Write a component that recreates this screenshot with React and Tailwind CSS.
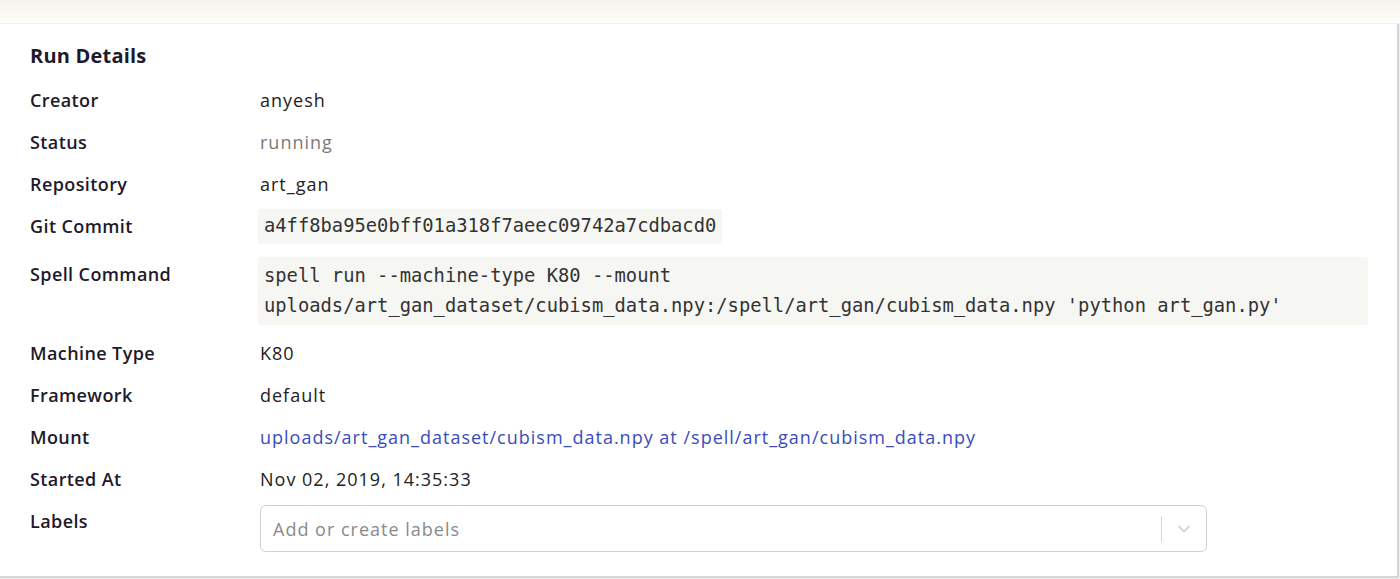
import { ChevronDown } from "lucide-react";

const rows = [
  { label: "Creator", value: "anyesh" },
  { label: "Status", value: "running", tone: "text-[#7a7a7a]" },
  { label: "Repository", value: "art_gan" },
];

const rowsAfter = [
  { label: "Machine Type", value: "K80" },
  { label: "Framework", value: "default" },
  {
    label: "Mount",
    value: "uploads/art_gan_dataset/cubism_data.npy at /spell/art_gan/cubism_data.npy",
    tone: "text-[#3a4bbf]",
  },
  { label: "Started At", value: "Nov 02, 2019, 14:35:33" },
];

const labelCls = "shrink-0 font-semibold tracking-[0.4px] text-[#1d1a2b]";

function Row({ label, value, tone }) {
  return (
    <div className="flex items-center h-[42px]">
      <div className={`w-[230px] ${labelCls}`}>{label}</div>
      <div className={tone || "text-[#222]"}>{value}</div>
    </div>
  );
}

export default function App() {
  const mono = { fontFamily: "'DejaVu Sans Mono', monospace", letterSpacing: 0 };
  return (
    <div className="w-[1400px] h-[579px] bg-[#eeeeee] overflow-hidden font-['Open_Sans',sans-serif] text-[18px] leading-[30px] tracking-[1px]">
      <div className="h-[24px] bg-gradient-to-b from-[#f6f4ec] to-[#fdfdfb] border-b border-[#f1f0ea]" />
      <div className="w-[1399px] h-[554px] bg-white border-r-2 border-b-2 border-[#d3d6dc] pl-[30px] pt-[17px]">
        <h2 className="text-[20px] font-bold text-[#1d1a2b] leading-[30px] mb-[8px] tracking-[0.2px]">Run Details</h2>
        {rows.map((r) => (
          <Row key={r.label} {...r} />
        ))}
        <div className="flex items-center h-[42px]">
          <div className={`w-[228px] ${labelCls}`}>Git Commit</div>
          <div
            className="bg-[#f6f6f3] rounded-[3px] px-[6px] h-[35px] flex items-center text-[#333] text-[18.8px]"
            style={mono}
          >
            a4ff8ba95e0bff01a318f7aeec09742a7cdbacd0
          </div>
        </div>
        <div className="flex items-start pt-[10px] pb-[7px]">
          <div className={`w-[228px] pt-[2px] ${labelCls}`}>Spell Command</div>
          <div
            className="bg-[#f6f6f3] rounded-[3px] px-[6px] py-[4px] w-[1110px] text-[#333] text-[18.8px] leading-[30px]"
            style={mono}
          >
            spell run --machine-type K80 --mount uploads/art_gan_dataset/cubism_data.npy:/spell/art_gan/cubism_data.npy 'python art_gan.py'
          </div>
        </div>
        {rowsAfter.map((r) => (
          <Row key={r.label} {...r} />
        ))}
        <div className="flex items-start">
          <div className={`w-[230px] h-[42px] flex items-center ${labelCls}`}>Labels</div>
          <div className="mt-[5px] w-[947px] h-[47px] border border-[#cdd1d9] rounded-[6px] flex items-center">
            <div className="flex-1 pl-[12px] text-[#8a8a8a]">Add or create labels</div>
            <div className="w-px h-[26px] bg-[#d3d6dc]" />
            <div className="w-[44px] flex justify-center text-[#c9ced6]">
              <ChevronDown size={20} strokeWidth={2} />
            </div>
          </div>
        </div>
      </div>
    </div>
  );
}
